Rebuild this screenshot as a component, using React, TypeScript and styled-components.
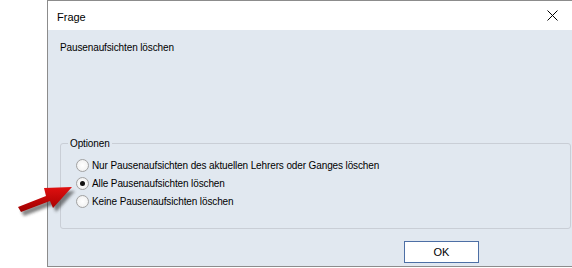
import React from "react";
import styled, { createGlobalStyle } from "styled-components";

const Global = createGlobalStyle`
  html, body { margin: 0; padding: 0; background: #ffffff; overflow: hidden; }
  body { font-family: "Liberation Sans", Arial, sans-serif; font-size: 10px; letter-spacing: -0.12px; color: #000; }
`;

const Page = styled.div`
  position: relative;
  width: 572px;
  height: 268px;
  padding-left: 47px;
  box-sizing: border-box;
`;

const Dialog = styled.div`
  width: 530px;
  height: 267px;
  box-sizing: border-box;
  border: 1px solid #8c8c8c;
  display: flex;
  flex-direction: column;
  background: #e1e8f0;
`;

const TitleBar = styled.div`
  height: 29px;
  background: #ffffff;
  display: flex;
  align-items: center;
  justify-content: space-between;
  padding-left: 9px;
  padding-right: 18px;
`;

const Title = styled.span`
  font-size: 11px;
  letter-spacing: 0;
  margin-top: 2px;
`;

const Close = styled.svg`
  width: 11px;
  height: 11px;
`;

const Body = styled.div`
  flex: 1;
  display: flex;
  flex-direction: column;
  padding: 11px 5px 3px 12px;
`;

const Message = styled.div`
  height: 14px;
  line-height: 14px;
`;

const Group = styled.fieldset`
  margin: 82px 0 0 0;
  padding: 8px 0 0 15px;
  border: 1px solid #c9ced6;
  border-radius: 3px;
  height: 92px;
  box-sizing: border-box;
  display: flex;
  flex-direction: column;
  gap: 4px;
`;

const Legend = styled.legend`
  padding: 0 2px;
  margin-left: -8px;
  line-height: 13px;
`;

const Option = styled.label`
  display: flex;
  align-items: center;
  height: 14px;
  gap: 3px;
`;

const Radio = styled.span<{ $checked?: boolean }>`
  width: 11px;
  height: 11px;
  border-radius: 50%;
  border: 1px solid #a2a2a2;
  background: radial-gradient(circle at 50% 50%, #ffffff 0%, #f4f4f4 60%, #e6e6e6 100%);
  display: flex;
  align-items: center;
  justify-content: center;
  flex-shrink: 0;
  &::after {
    content: "";
    width: 5px;
    height: 5px;
    border-radius: 50%;
    background: #111;
    display: ${(p) => (p.$checked ? "block" : "none")};
  }
`;

const Footer = styled.div`
  display: flex;
  justify-content: flex-end;
  padding: 12px 92px 0 0;
`;

const Button = styled.button`
  width: 75px;
  height: 22px;
  background: #ffffff;
  border: 1px solid #4d6fa5;
  border-radius: 0;
  font-family: inherit;
  font-size: 11px;
  padding: 0;
  color: #000;
`;

const Arrow = styled.svg`
  position: absolute;
  left: 10px;
  top: 176px;
  width: 75px;
  height: 45px;
  overflow: visible;
`;

export default function App() {
  return (
    <>
      <Global />
      <Page>
        <Dialog>
          <TitleBar>
            <Title>Frage</Title>
            <Close viewBox="0 0 11 11">
              <path d="M0.5 0.5 L10.5 10.5 M10.5 0.5 L0.5 10.5" stroke="#000" strokeWidth="1" />
            </Close>
          </TitleBar>
          <Body>
            <Message>Pausenaufsichten löschen</Message>
            <Group>
              <Legend>Optionen</Legend>
              <Option>
                <Radio />
                Nur Pausenaufsichten des aktuellen Lehrers oder Ganges löschen
              </Option>
              <Option>
                <Radio $checked />
                Alle Pausenaufsichten löschen
              </Option>
              <Option>
                <Radio />
                Keine Pausenaufsichten löschen
              </Option>
            </Group>
            <Footer>
              <Button>OK</Button>
            </Footer>
          </Body>
        </Dialog>
        <Arrow viewBox="10 176 75 45">
          <defs>
            <filter id="sh" x="-30%" y="-30%" width="160%" height="160%">
              <feGaussianBlur stdDeviation="1.5" />
            </filter>
            <linearGradient id="rg" x1="0" y1="0" x2="0" y2="1">
              <stop offset="0" stopColor="#e01010" />
              <stop offset="1" stopColor="#a00000" />
            </linearGradient>
          </defs>
          <g transform="translate(3,4)" filter="url(#sh)" opacity="0.6">
            <path d="M18 207 L46 196 L44 188 L72 187 L53 208 L50 201 L21 212 Z" fill="#333" />
          </g>
          <path d="M18 207 L46 196 L44 188 L72 187 L53 208 L50 201 L21 212 Z" fill="url(#rg)" />
        </Arrow>
      </Page>
    </>
  );
}
